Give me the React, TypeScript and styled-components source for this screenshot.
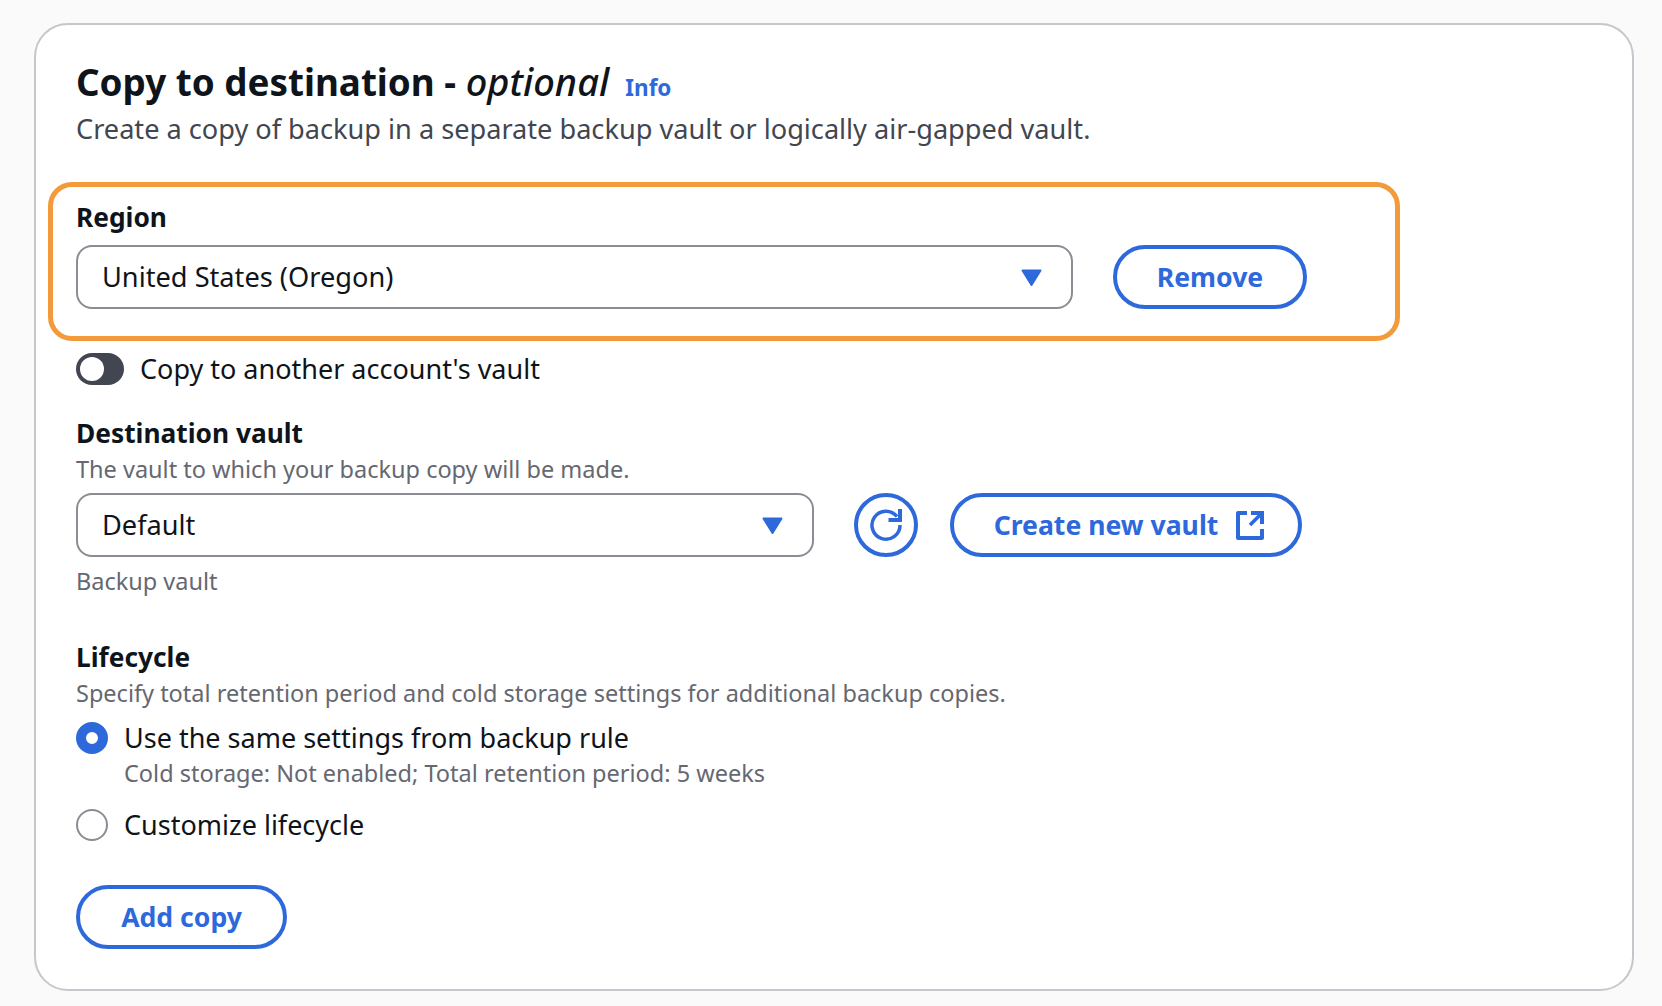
import React from 'react';
import styled, { createGlobalStyle } from 'styled-components';

const GlobalStyle = createGlobalStyle`
  html, body {
    margin: 0;
    padding: 0;
    background: #fafafa;
  }
  body {
    font-family: 'Noto Sans', 'Open Sans', sans-serif;
    color: #0f141a;
  }
`;

const Page = styled.div`
  width: 1662px;
  height: 1006px;
  box-sizing: border-box;
  padding: 23px 28px 15px 34px;
  overflow: hidden;
`;

const Card = styled.section`
  box-sizing: border-box;
  height: 968px;
  background: #fff;
  border: 2px solid #c6c6cd;
  border-radius: 34px;
  padding: 32px 39px 40px 40px;
`;

const Heading = styled.div`
  display: flex;
  align-items: baseline;
  gap: 16px;
  height: 50px;
  line-height: 48px;
`;

const Title = styled.h2`
  margin: 0;
  font-size: 36.8px;
  font-weight: 700;
  color: #0f141a;

  em {
    font-size: 38px;
    font-weight: 500;
    font-style: italic;
  }
`;

const InfoLink = styled.a`
  font-size: 22.5px;
  font-weight: 700;
  color: #2e69db;
`;

const Subtitle = styled.p`
  margin: 4px 0 0;
  font-size: 27.15px;
  line-height: 36px;
  color: #424650;
`;

const Highlight = styled.div`
  box-sizing: border-box;
  width: 1352px;
  margin: 35px 0 0 -28px;
  padding: 14px 23px 27px;
  border: 5px solid #f39a3a;
  border-radius: 24px;
`;

const Label = styled.div<{ $top?: number }>`
  margin-top: ${(p) => p.$top ?? 0}px;
  font-size: 26.3px;
  font-weight: 700;
  line-height: 32px;
  color: #0f141a;
`;

const Hint = styled.div<{ $top?: number; $left?: number }>`
  margin-top: ${(p) => p.$top ?? 0}px;
  margin-left: ${(p) => p.$left ?? 0}px;
  font-size: 23.5px;
  line-height: 28px;
  color: #656871;
`;

const Row = styled.div<{ $gap: number; $top?: number }>`
  display: flex;
  align-items: center;
  gap: ${(p) => p.$gap}px;
  margin-top: ${(p) => p.$top ?? 0}px;
`;

const Select = styled.div<{ $width: number }>`
  box-sizing: border-box;
  width: ${(p) => p.$width}px;
  height: 64px;
  display: flex;
  align-items: center;
  justify-content: space-between;
  padding: 0 29px 2px 24px;
  background: #fff;
  border: 2px solid #8c8c94;
  border-radius: 16px;
  font-size: 27.2px;
  color: #0f141a;

  svg {
    margin-top: 3px;
  }
`;

const Button = styled.button<{ $width: number; $left?: number; $shift?: number }>`
  box-sizing: border-box;
  width: ${(p) => p.$width}px;
  height: 64px;
  margin-left: ${(p) => p.$left ?? 0}px;
  display: flex;
  align-items: center;
  justify-content: center;
  gap: 18px;
  padding: 0 0 0 ${(p) => p.$shift ?? 0}px;
  background: #fff;
  border: 4px solid #2e69db;
  border-radius: 32px;
  font-family: inherit;
  font-size: 26.6px;
  font-weight: 700;
  color: #2e69db;
`;

const Toggle = styled.span`
  box-sizing: border-box;
  width: 48px;
  height: 32px;
  display: flex;
  align-items: center;
  padding-left: 4px;
  background: #424650;
  border-radius: 16px;

  &::before {
    content: '';
    width: 24px;
    height: 24px;
    border-radius: 50%;
    background: #fff;
  }
`;

const OptionText = styled.span`
  font-size: 27px;
  line-height: 36px;
  color: #0f141a;
`;

const Radio = styled.span<{ $checked?: boolean }>`
  box-sizing: border-box;
  width: 32px;
  height: 32px;
  border-radius: 50%;
  background: #fff;
  border: ${(p) => (p.$checked ? '10px solid #2e69db' : '2px solid #8c8c94')};
`;

const Caret = () => (
  <svg width="21" height="18" viewBox="0 0 21 18">
    <path d="M1.5 1.5h18L10.5 16z" fill="#2e69db" stroke="#2e69db" strokeWidth="2" strokeLinejoin="round" />
  </svg>
);

const RefreshIcon = () => (
  <svg width="34" height="34" viewBox="0 0 34 34" fill="none" stroke="#2e69db" strokeWidth="3.5">
    <path d="M28 8.5A14 14 0 1 0 31 17" />
    <path d="M31 1v11H19.5" strokeWidth="4" />
  </svg>
);

const ExternalIcon = () => (
  <svg width="28" height="30" viewBox="0 0 28 30" fill="none" stroke="#2e69db" strokeWidth="4">
    <path d="M11 3H2v25h24v-9" strokeLinejoin="round" />
    <path d="M15 3h11v11" />
    <path d="M26 3L14 15" strokeWidth="3.5" />
  </svg>
);

export default function App() {
  return (
    <Page>
      <GlobalStyle />
      <Card>
        <Heading>
          <Title>
            Copy to destination - <em>optional</em>
          </Title>
          <InfoLink>Info</InfoLink>
        </Heading>
        <Subtitle>Create a copy of backup in a separate backup vault or logically air-gapped vault.</Subtitle>

        <Highlight>
          <Label>Region</Label>
          <Row $gap={40} $top={12}>
            <Select $width={997}>
              United States (Oregon)
              <Caret />
            </Select>
            <Button $width={194}>Remove</Button>
          </Row>
        </Highlight>

        <Row $gap={16} $top={10}>
          <Toggle />
          <OptionText>Copy to another account's vault</OptionText>
        </Row>

        <Label $top={30}>Destination vault</Label>
        <Hint $top={6}>The vault to which your backup copy will be made.</Hint>
        <Row $gap={0} $top={10}>
          <Select $width={738}>
            Default
            <Caret />
          </Select>
          <Button $width={64} $left={40} aria-label="Refresh">
            <RefreshIcon />
          </Button>
          <Button $width={352} $left={32} $shift={6}>
            Create new vault
            <ExternalIcon />
          </Button>
        </Row>
        <Hint $top={10}>Backup vault</Hint>

        <Label $top={46}>Lifecycle</Label>
        <Hint $top={6}>Specify total retention period and cold storage settings for additional backup copies.</Hint>
        <Row $gap={16} $top={13}>
          <Radio $checked />
          <OptionText>Use the same settings from backup rule</OptionText>
        </Row>
        <Hint $top={3} $left={48}>Cold storage: Not enabled; Total retention period: 5 weeks</Hint>
        <Row $gap={16} $top={20}>
          <Radio />
          <OptionText>Customize lifecycle</OptionText>
        </Row>

        <Row $gap={0} $top={42}>
          <Button $width={211}>Add copy</Button>
        </Row>
      </Card>
    </Page>
  );
}
